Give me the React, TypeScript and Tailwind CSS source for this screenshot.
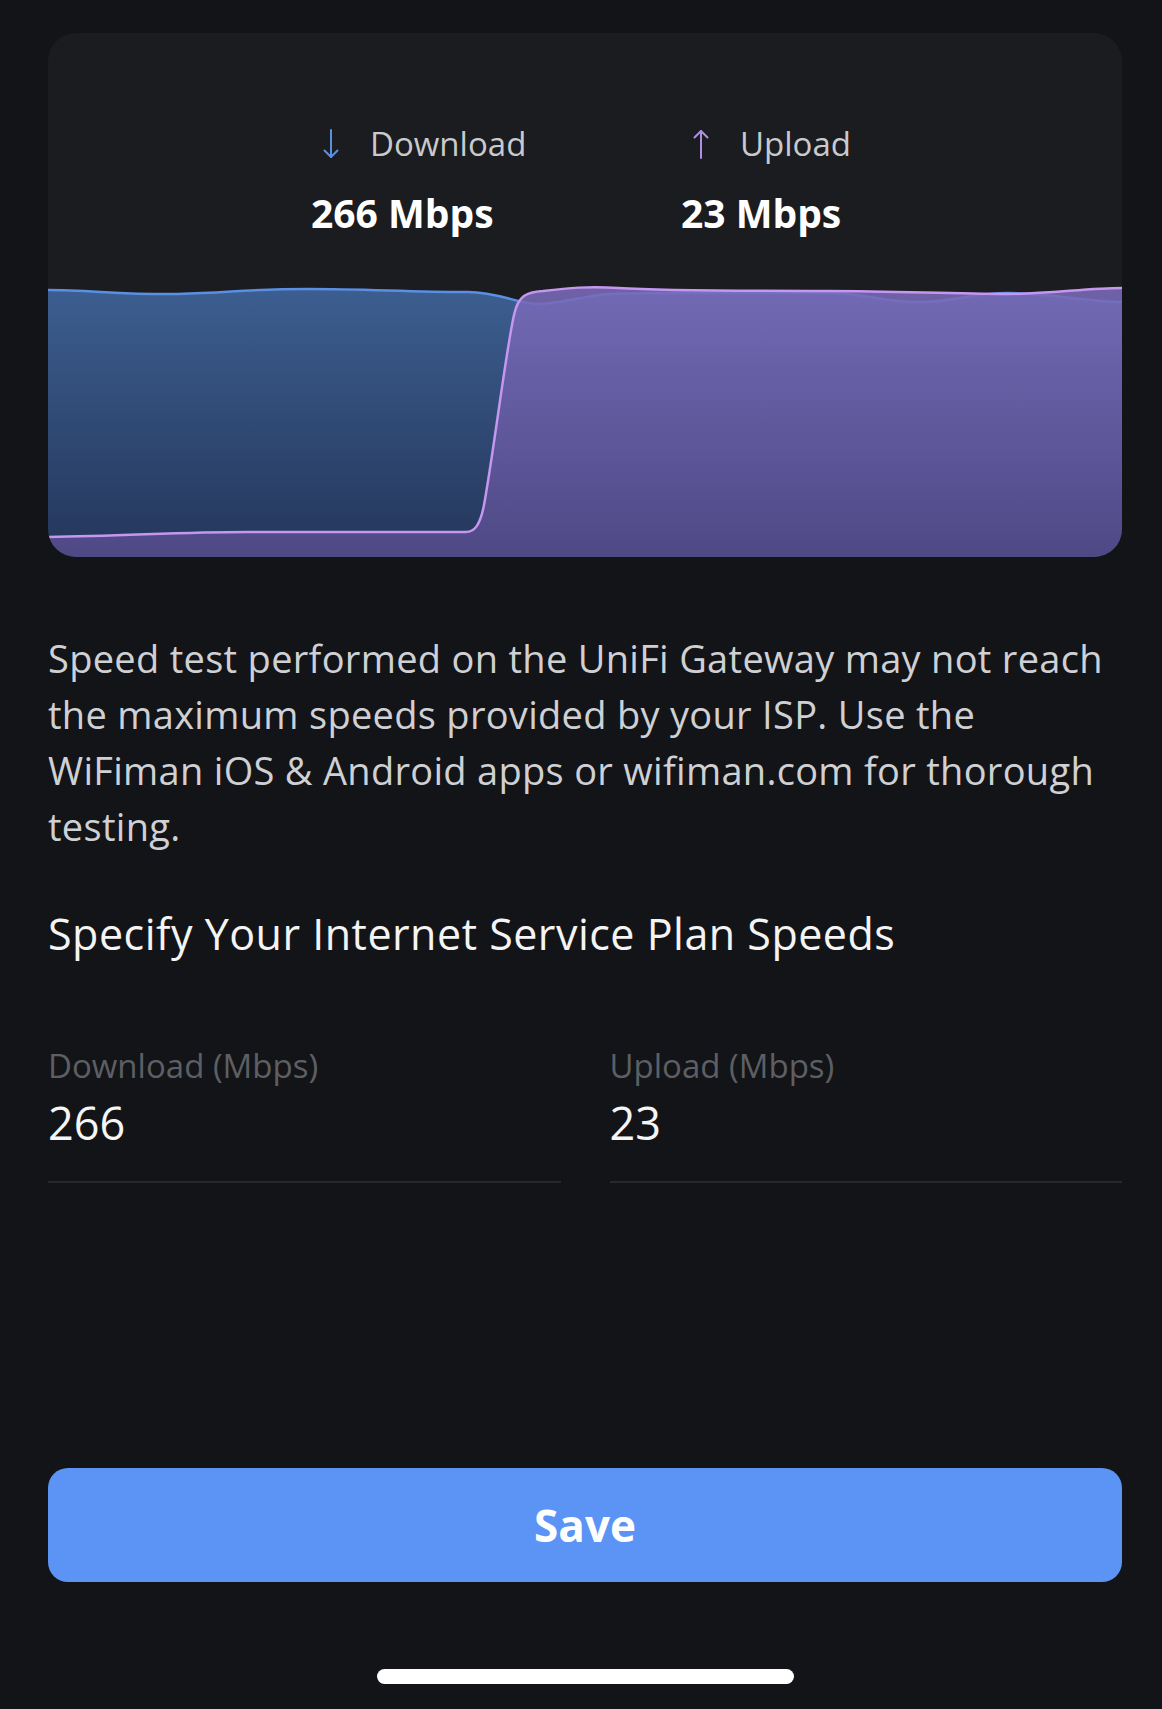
import React from 'react';

const font = { fontFamily: '"Open Sans", "Noto Sans", sans-serif' };

const ArrowDown: React.FC<{ color: string }> = ({ color }) => (
  <svg width="18" height="30" viewBox="0 0 18 30" fill="none" stroke={color} strokeWidth="2" strokeLinecap="round" strokeLinejoin="round">
    <path d="M9 1v27" />
    <path d="M2.5 21.5L9 28l6.5-6.5" />
  </svg>
);

const ArrowUp: React.FC<{ color: string }> = ({ color }) => (
  <svg width="18" height="30" viewBox="0 0 18 30" fill="none" stroke={color} strokeWidth="2" strokeLinecap="round" strokeLinejoin="round">
    <path d="M9 29V2" />
    <path d="M2.5 8.5L9 2l6.5 6.5" />
  </svg>
);

// chart coords: x = page x - 48, y = page y - 280
const blueLine =
  'M0 10 C40 10 80 15 130 14 C180 13 200 9 260 9 C320 9 360 12 420 12 C450 12 470 24 490 24 C510 24 530 17 560 14 C620 12 700 13 780 13 C820 13 830 22 870 22 C910 22 920 13 960 13 C1000 13 1040 22 1074 22';
const purpleLine =
  'M0 257 C80 256 130 252 200 252 L418 252 C426 252 432 246 436 225 C446 170 458 70 466 35 C470 16 478 12 495 11 C520 8 540 6 570 8 C620 11 700 11 780 11 C850 11 900 14 960 14 C1000 14 1040 8 1074 8';

const Chart: React.FC = () => (
  <svg className="block w-full h-[277px]" viewBox="0 0 1074 277" preserveAspectRatio="none">
    <defs>
      <linearGradient id="blueFill" x1="0" y1="0" x2="0" y2="1">
        <stop offset="0" stopColor="#3c5e90" />
        <stop offset="1" stopColor="#24365a" />
      </linearGradient>
      <linearGradient id="purpleFill" x1="0" y1="0" x2="0" y2="1">
        <stop offset="0" stopColor="#7a6bba" stopOpacity="0.88" />
        <stop offset="1" stopColor="#534b8a" stopOpacity="0.9" />
      </linearGradient>
    </defs>
    <path d={`${blueLine} L1074 277 L0 277 Z`} fill="url(#blueFill)" />
    <path d={blueLine} fill="none" stroke="#5b8fe2" strokeWidth="2.5" />
    <path d={`${purpleLine} L1074 277 L0 277 Z`} fill="url(#purpleFill)" />
    <path d={purpleLine} fill="none" stroke="#c697f0" strokeWidth="2.5" />
  </svg>
);

const Field: React.FC<{ label: string; value: string }> = ({ label, value }) => (
  <div className="flex-1 border-b-2 border-[#26282c] pb-[30px]">
    <div className="text-[33px] leading-[40px] text-[#5d5f64]">{label}</div>
    <div className="mt-[9px] text-[45px] leading-[56px] text-[#f5f5f6]">{value}</div>
  </div>
);

export default function App() {
  return (
    <div className="min-h-[1709px] w-full bg-[#131417] pl-[48px] pr-[40px] flex flex-col" style={font}>
      <div className="mt-[33px] h-[524px] rounded-[28px] bg-[#1b1c1f] overflow-hidden flex flex-col">
        <div className="flex pl-[263px] pt-[92px]">
          <div className="w-[370px] flex flex-col">
            <div className="flex items-center gap-[30px] pl-[11px] h-[38px]">
              <ArrowDown color="#5b8fe2" />
              <span className="text-[33px] text-[#c9cace]">Download</span>
            </div>
            <div className="mt-[30px] text-[39px] leading-[40px] font-bold text-white">266 Mbps</div>
          </div>
          <div className="flex flex-col">
            <div className="flex items-center gap-[30px] pl-[11px] h-[38px]">
              <ArrowUp color="#b08ee0" />
              <span className="text-[33px] text-[#c9cace]">Upload</span>
            </div>
            <div className="mt-[30px] text-[39px] leading-[40px] font-bold text-white">23 Mbps</div>
          </div>
        </div>
        <div className="mt-auto">
          <Chart />
        </div>
      </div>

      <p className="mt-[73px] text-[38px] leading-[56px] tracking-[0.3px] text-[#cfd0d4]">
        Speed test performed on the UniFi Gateway may not reach the maximum speeds provided by your ISP. Use the WiFiman iOS &amp; Android apps or wifiman.com for thorough testing.
      </p>

      <h2 className="mt-[52px] text-[43px] leading-[56px] tracking-[0.5px] text-[#f4f4f5]">Specify Your Internet Service Plan Speeds</h2>

      <div className="mt-[84px] flex gap-[49px]">
        <Field label="Download (Mbps)" value="266" />
        <Field label="Upload (Mbps)" value="23" />
      </div>

      <button className="mt-[285px] h-[114px] w-full rounded-[20px] bg-[#5b94f4] text-[44px] font-bold text-white">
        Save
      </button>

      <div className="mt-[87px] flex justify-center">
        <div className="h-[15px] w-[417px] rounded-full bg-white" />
      </div>
    </div>
  );
}
